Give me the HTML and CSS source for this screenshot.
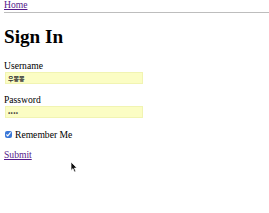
FILE: index.html
```html
<!DOCTYPE html>
<html lang="en">
<head>
  <meta charset="UTF-8">
  <meta name="viewport" content="width=device-width,initial-scale=1.0">
  <title>Sign In</title>
  <link rel="stylesheet" href="styles.css">
</head>
<body>
  <nav class="top-nav"><a href="#">Home</a></nav>
  <hr class="rule">
  <h1>Sign In</h1>
  <form class="login-form">
    <div class="field">
      <label for="username">Username</label>
      <input type="text" id="username" value="우뽕뽕">
    </div>
    <div class="field">
      <label for="password">Password</label>
      <input type="password" id="password" value="1234">
    </div>
    <div class="remember">
      <input type="checkbox" id="remember" checked>
      <label for="remember">Remember Me</label>
    </div>
    <a href="#" class="submit">Submit</a>
  </form>
  <!-- mouse pointer in the shot -->
  <svg class="cursor" width="8" height="12" viewBox="0 0 8 12">
    <path d="M1 1 L1 9.5 L3 7.6 L4.4 11 L5.8 10.4 L4.4 7.1 L7 7 Z" fill="#111" stroke="#fff" stroke-width="0.7"/>
  </svg>
</body>
</html>
```

FILE: styles.css
```css
body { font-family: "Liberation Serif", "Noto Sans CJK KR", serif; font-size: 9.6px; margin: 0 0 0 4px; background: #fff; color: #000; }
a { color: #551a8b; }
.top-nav { line-height: 10px; }
.rule { margin: 2px 0 0; border: 0; border-top: 1px solid #bdbdbd; height: 0; }
h1 { font-size: 19.2px; margin: 13px 0 12px; line-height: 22px; }
.login-form { display: flex; flex-direction: column; align-items: flex-start; }
.field { display: flex; flex-direction: column; align-items: flex-start; margin-bottom: 10px; }
.field label { line-height: 11px; }
.field input {
  width: 138px; height: 12px; box-sizing: border-box; margin: 1px 0 0 1px; padding: 0 3px;
  border: 0; background: #fbfdc4; font-family: "Noto Sans CJK KR", sans-serif;
  font-size: 6px; font-weight: bold; color: #333; box-shadow: inset 0 0 0 1px #f1f4b2;
}
#password { font-size: 6px; letter-spacing: 0.3px; }
.remember { display: flex; align-items: center; gap: 3px; margin-top: 1px; line-height: 11px; }
.remember input { width: 7px; height: 7px; margin: 0 0 0 1px; accent-color: #3a78d8; }
.submit { margin-top: 9px; line-height: 11px; }
.cursor { position: fixed; left: 70px; top: 161px; }
```
